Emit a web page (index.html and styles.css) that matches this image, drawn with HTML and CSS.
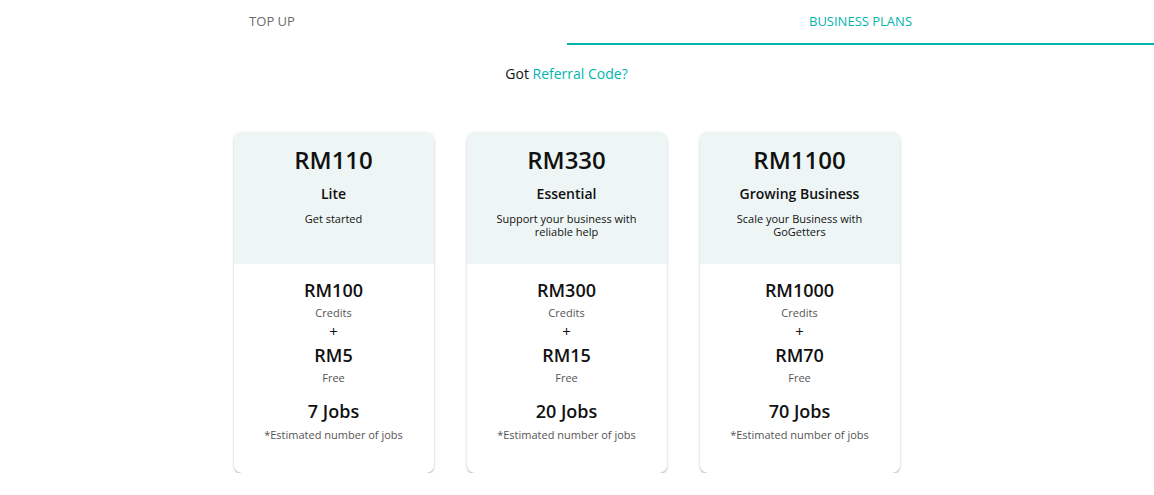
FILE: index.html
```html
<!DOCTYPE html>
<html>
<head>
<meta charset="utf-8">
<link rel="stylesheet" href="styles.css">
</head>
<body>
<div class="page">
  <div class="tabs">
    <div class="tab tab-left">TOP UP</div>
    <div class="tab tab-active">BUSINESS PLANS</div>
  </div>
  <div class="main">
    <p class="referral">Got <span class="link">Referral Code?</span></p>
    <div class="cards">
      <div class="card">
        <div class="card-head">
          <div class="price">RM110</div>
          <div class="name">Lite</div>
          <div class="desc">Get started</div>
        </div>
        <div class="card-body">
          <div class="amount">RM100</div>
          <div class="label">Credits</div>
          <div class="plus">+</div>
          <div class="amount amount-free">RM5</div>
          <div class="label">Free</div>
          <div class="jobs">7 Jobs</div>
          <div class="note">*Estimated number of jobs</div>
        </div>
      </div>
      <div class="card">
        <div class="card-head">
          <div class="price">RM330</div>
          <div class="name">Essential</div>
          <div class="desc">Support your business with reliable help</div>
        </div>
        <div class="card-body">
          <div class="amount">RM300</div>
          <div class="label">Credits</div>
          <div class="plus">+</div>
          <div class="amount amount-free">RM15</div>
          <div class="label">Free</div>
          <div class="jobs">20 Jobs</div>
          <div class="note">*Estimated number of jobs</div>
        </div>
      </div>
      <div class="card">
        <div class="card-head">
          <div class="price">RM1100</div>
          <div class="name">Growing Business</div>
          <div class="desc">Scale your Business with GoGetters</div>
        </div>
        <div class="card-body">
          <div class="amount">RM1000</div>
          <div class="label">Credits</div>
          <div class="plus">+</div>
          <div class="amount amount-free">RM70</div>
          <div class="label">Free</div>
          <div class="jobs">70 Jobs</div>
          <div class="note">*Estimated number of jobs</div>
        </div>
      </div>
    </div>
  </div>
</div>
</body>
</html>
```

FILE: styles.css
```css
* { box-sizing: border-box; }
html, body { margin: 0; padding: 0; background: #fff; }
body {
  font-family: "Open Sans", "Noto Sans", sans-serif;
  color: #111;
}
.page { width: 1154px; }
.tabs {
  display: flex;
  height: 45px;
}
.tab {
  font-size: 13px;
  line-height: 1;
  padding-top: 15px;
  text-align: center;
}
.tab-left {
  width: 567px;
  padding-right: 23px;
  color: #6b6b6b;
}
.tab-active {
  width: 587px;
  color: #00b5ad;
  border-bottom: 2px solid #00b5ad;
}
.main {
  width: 1133px;
}
.referral {
  margin: 19px 0 0;
  text-align: center;
  font-size: 14px;
  line-height: 20px;
  color: #111;
}
.link { color: #00b5ad; }
.cards {
  display: flex;
  justify-content: center;
  gap: 33px;
  margin-top: 48px;
}
.card {
  width: 200px;
  height: 341px;
  border-radius: 8px;
  background: #fff;
  overflow: hidden;
  box-shadow: 0 1px 3px rgba(0,0,0,0.18), 0 2px 2px -1px rgba(0,0,0,0.25);
  text-align: center;
}
.card-head {
  height: 132px;
  background: #eef6f5;
  padding: 12px 20px 0;
}
.price {
  font-size: 24px;
  font-weight: 600;
  line-height: 32px;
}
.name {
  margin-top: 8px;
  font-size: 14px;
  font-weight: 600;
  line-height: 20px;
}
.desc {
  margin-top: 8px;
  font-size: 11px;
  line-height: 13px;
  color: #111;
}
.card-body {
  padding-top: 13px;
}
.amount {
  font-size: 18px;
  font-weight: 600;
  line-height: 26px;
}
.amount-free { margin-top: 3px; }
.label {
  font-size: 11px;
  line-height: 20px;
  color: #555;
}
.plus {
  font-size: 15px;
  line-height: 16px;
  color: #111;
}
.jobs {
  margin-top: 10px;
  font-size: 18px;
  font-weight: 600;
  line-height: 26px;
}
.note {
  font-size: 11px;
  line-height: 22px;
  color: #555;
}
```
